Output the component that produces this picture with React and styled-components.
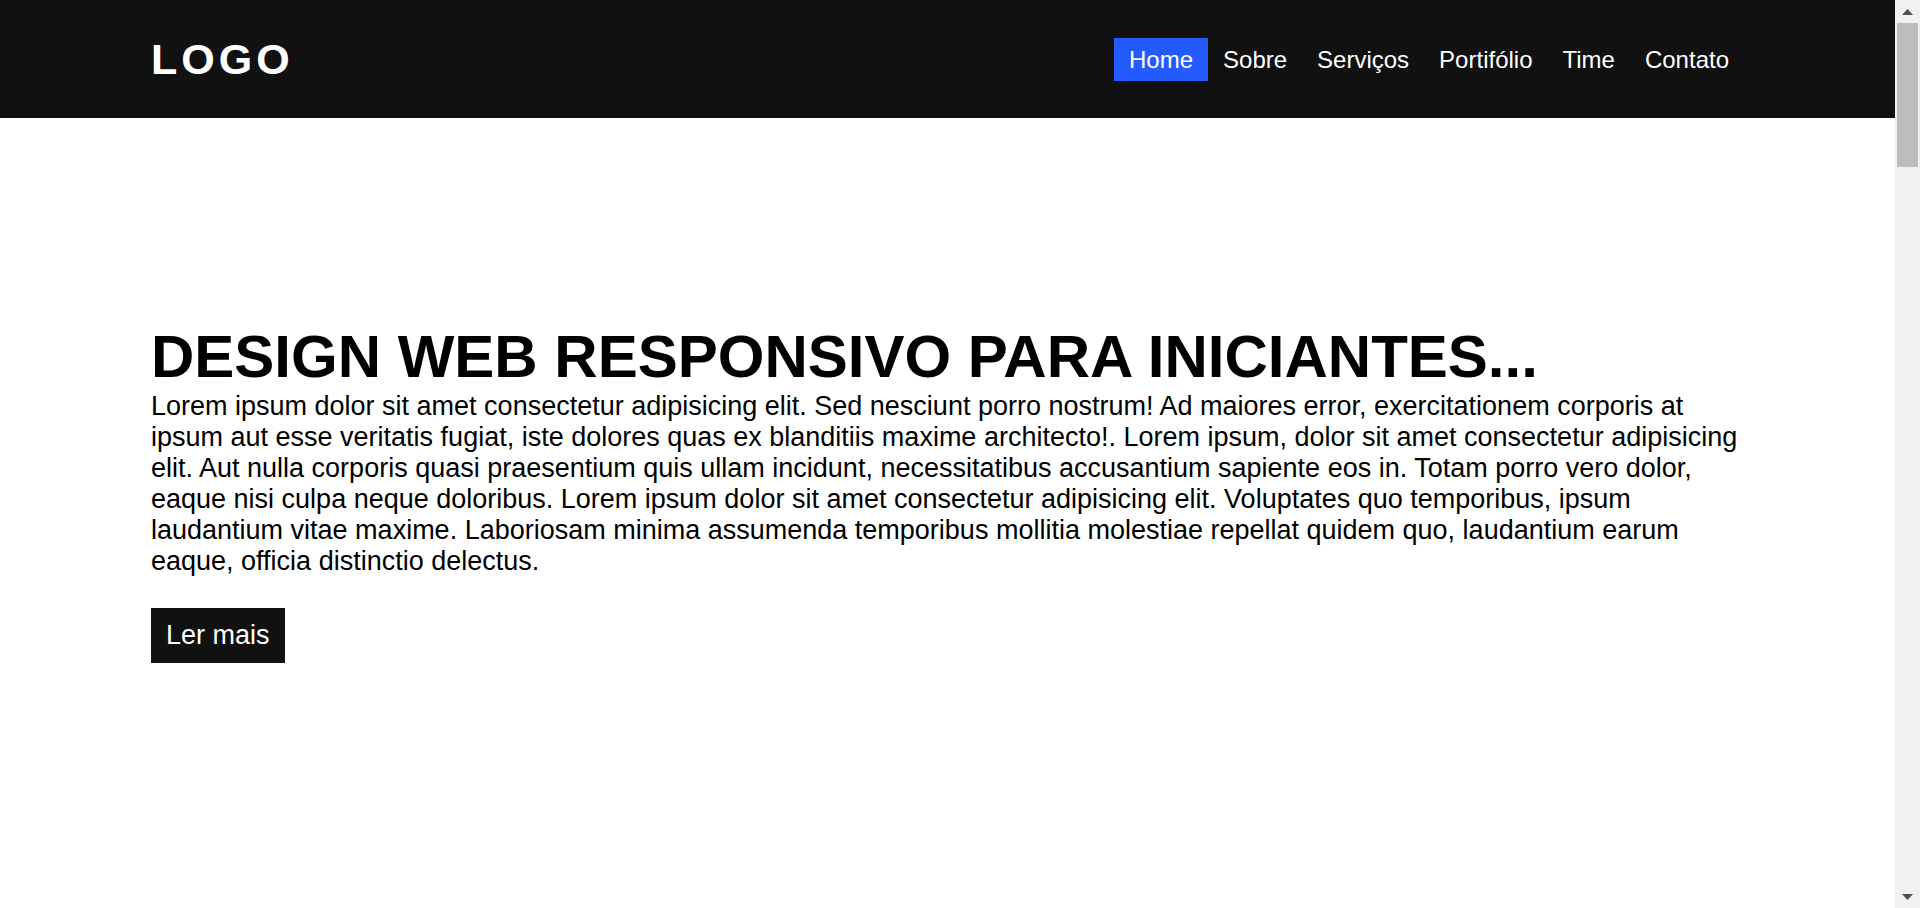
import React from 'react'
import styled, { createGlobalStyle } from 'styled-components'

const links = ['Home', 'Sobre', 'Serviços', 'Portifólio', 'Time', 'Contato']

function Arrow({ down }) {
  return (
    <svg width="11" height="6" viewBox="0 0 11 6">
      <path d={down ? 'M0 0h11L5.5 6z' : 'M0 6h11L5.5 0z'} fill="#505050" />
    </svg>
  )
}

export default function App() {
  const active = 'Home'

  return (
    <>
      <GlobalStyle />
      <Header>
        <Container>
          <HeaderRow>
            <Logo>LOGO</Logo>
            <Nav>
              {links.map((link) => (
                <NavLink key={link} href={`#${link.toLowerCase()}`} $active={link === active}>
                  {link}
                </NavLink>
              ))}
            </Nav>
          </HeaderRow>
        </Container>
      </Header>

      <Hero id="home">
        <Container>
          <Title>DESIGN WEB RESPONSIVO PARA INICIANTES...</Title>
          <Text>
            Lorem ipsum dolor sit amet consectetur adipisicing elit. Sed nesciunt porro nostrum! Ad
            maiores error, exercitationem corporis at ipsum aut esse veritatis fugiat, iste dolores
            quas ex blanditiis maxime architecto!. Lorem ipsum, dolor sit amet consectetur
            adipisicing elit. Aut nulla corporis quasi praesentium quis ullam incidunt,
            necessitatibus accusantium sapiente eos in. Totam porro vero dolor, eaque nisi culpa
            neque doloribus. Lorem ipsum dolor sit amet consectetur adipisicing elit. Voluptates quo
            temporibus, ipsum laudantium vitae maxime. Laboriosam minima assumenda temporibus
            mollitia molestiae repellat quidem quo, laudantium earum eaque, officia distinctio
            delectus.
          </Text>
          <Button href="#sobre">Ler mais</Button>
        </Container>
      </Hero>

      {links.slice(1).map((link) => (
        <Section key={link} id={link.toLowerCase()} />
      ))}

      {/* window scrollbar, drawn since the browser hides its own */}
      <ScrollBar aria-hidden="true">
        <ScrollButton>
          <Arrow />
        </ScrollButton>
        <ScrollTrack>
          <ScrollThumb />
        </ScrollTrack>
        <ScrollButton>
          <Arrow down />
        </ScrollButton>
      </ScrollBar>
    </>
  )
}

const GlobalStyle = createGlobalStyle`
  * {
    margin: 0;
    padding: 0;
    box-sizing: border-box;
  }

  body {
    font-family: 'Liberation Sans', Arial, sans-serif;
    background: #fff;
    color: #000;
    padding-right: 25px;
  }
`

const Container = styled.div`
  padding: 0 151px;
`

const Header = styled.header`
  background: #111;
  height: 118px;
`

const HeaderRow = styled.div`
  height: 118px;
  display: flex;
  align-items: center;
  justify-content: space-between;
`

const Logo = styled.h1`
  color: #fff;
  font-size: 43px;
  font-weight: 700;
  letter-spacing: 4px;
  line-height: 1;
`

const Nav = styled.nav`
  display: flex;
`

const NavLink = styled.a`
  display: block;
  padding: 8px 15px;
  font-size: 24px;
  line-height: 27px;
  color: #fff;
  text-decoration: none;
  background: ${(props) => (props.$active ? '#235bff' : 'transparent')};
`

const Hero = styled.section`
  height: 790px;
  padding-top: 204px;
`

const Title = styled.h2`
  font-size: 60px;
  font-weight: 700;
  line-height: 69px;
  text-transform: uppercase;
`

const Text = styled.p`
  font-size: 27px;
  line-height: 31px;
  margin-bottom: 31px;
`

const Button = styled.a`
  display: inline-block;
  background: #111;
  color: #fff;
  font-size: 27px;
  line-height: 31px;
  padding: 12px 15px;
  text-decoration: none;
`

const Section = styled.section`
  height: 908px;
`

const ScrollBar = styled.div`
  position: fixed;
  top: 0;
  right: 0;
  bottom: 0;
  width: 25px;
  background: #f1f1f1;
  display: flex;
  flex-direction: column;
`

const ScrollButton = styled.div`
  height: 23px;
  display: flex;
  align-items: center;
  justify-content: center;
`

const ScrollTrack = styled.div`
  flex: 1;
  padding: 0 2px;
`

const ScrollThumb = styled.div`
  height: 144px;
  background: #bdbdbd;
`
